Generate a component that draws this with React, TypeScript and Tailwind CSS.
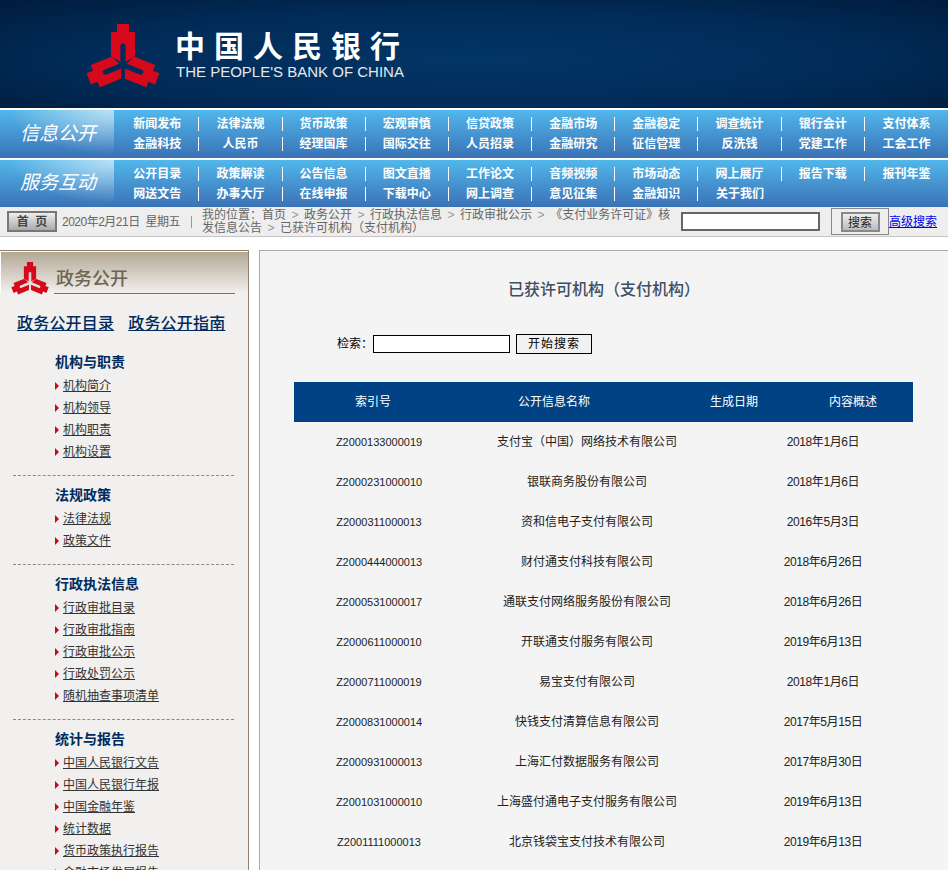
import type { ReactNode } from 'react'

const infoNav = [
  ['新闻发布', '法律法规', '货币政策', '宏观审慎', '信贷政策', '金融市场', '金融稳定', '调查统计', '银行会计', '支付体系'],
  ['金融科技', '人民币', '经理国库', '国际交往', '人员招录', '金融研究', '征信管理', '反洗钱', '党建工作', '工会工作'],
]
const serviceNav = [
  ['公开目录', '政策解读', '公告信息', '图文直播', '工作论文', '音频视频', '市场动态', '网上展厅', '报告下载', '报刊年鉴'],
  ['网送文告', '办事大厅', '在线申报', '下载中心', '网上调查', '意见征集', '金融知识', '关于我们', '', ''],
]

const sections = [
  { title: '机构与职责', items: ['机构简介', '机构领导', '机构职责', '机构设置'] },
  { title: '法规政策', items: ['法律法规', '政策文件'] },
  { title: '行政执法信息', items: ['行政审批目录', '行政审批指南', '行政审批公示', '行政处罚公示', '随机抽查事项清单'] },
  { title: '统计与报告', items: ['中国人民银行文告', '中国人民银行年报', '中国金融年鉴', '统计数据', '货币政策执行报告', '金融市场发展报告'] },
]

const rows = [
  ['Z2000133000019', '支付宝（中国）网络技术有限公司', '2018年1月6日'],
  ['Z2000231000010', '银联商务股份有限公司', '2018年1月6日'],
  ['Z2000311000013', '资和信电子支付有限公司', '2016年5月3日'],
  ['Z2000444000013', '财付通支付科技有限公司', '2018年6月26日'],
  ['Z2000531000017', '通联支付网络服务股份有限公司', '2018年6月26日'],
  ['Z2000611000010', '开联通支付服务有限公司', '2019年6月13日'],
  ['Z2000711000019', '易宝支付有限公司', '2018年1月6日'],
  ['Z2000831000014', '快钱支付清算信息有限公司', '2017年5月15日'],
  ['Z2000931000013', '上海汇付数据服务有限公司', '2017年8月30日'],
  ['Z2001031000010', '上海盛付通电子支付服务有限公司', '2019年6月13日'],
  ['Z2001111000013', '北京钱袋宝支付技术有限公司', '2019年6月13日'],
]

function Logo({ className }: { className: string }) {
  const top = 'M-6 -41H6V-33H12V-9L2.6 -3V-19A2.6 2.6 0 0 0 -2.6 -19V-3L-12 -9V-33H-6Z'
  const side = 'M-6 -37H6V-30H12V-7L2.6 -3V-19A2.6 2.6 0 0 0 -2.6 -19V-3L-12 -7V-30H-6Z'
  return (
    <svg viewBox="-45 -45 90 90" className={className} aria-hidden="true">
      <g fill="#d5091b">
        <path d={top} />
        <path d={side} transform="rotate(112)" />
        <path d={side} transform="rotate(248)" />
      </g>
    </svg>
  )
}

function NavBand({ label, data, height }: { label: string; data: string[][]; height: string }) {
  return (
    <div className={`flex bg-gradient-to-b from-[#52b7ea] to-[#3a72b6] ${height}`}>
      <div className="flex w-[115px] items-center pl-[20px] text-[19px] italic text-white bg-[radial-gradient(ellipse_at_top_right,rgba(255,255,255,0.6),transparent_65%)]">
        {label}
      </div>
      <div className="ml-[2px] flex flex-col gap-[6px] pt-[7px]">
        {data.map((row, r) => (
          <div key={r} className="flex">
            {row.map((item, i) => (
              <div
                key={i}
                className={`h-[14px] w-[83.2px] text-center text-[12px] font-bold leading-[14px] text-white ${
                  i < 9 && item && row[i + 1] ? 'border-r border-white' : ''
                }`}
              >
                {item}
              </div>
            ))}
          </div>
        ))}
      </div>
    </div>
  )
}

function Crumb({ children }: { children: ReactNode }) {
  return <span>{children}<span className="mx-[5.5px] text-[#999]">&gt;</span></span>
}

function Sidebar() {
  return (
    <aside className="w-[249px] shrink-0 border-r border-t border-[#8d8169] bg-[#f1f0ee]">
      <div className="relative h-[42px] border-l border-t border-white bg-gradient-to-b from-[#b4a895] to-[#f1f0ee]">
        <Logo className="absolute left-[6px] top-[8px] h-[46px] w-[46px]" />
        <div className="absolute left-[53px] right-[13px] top-[14px] h-[28px] border-b border-[#7d735f] pl-[2px] text-[18px] font-medium leading-[26px] text-[#6d6451]">
          政务公开
        </div>
      </div>
      <div className="mt-[20px] flex gap-[14px] pl-[17px] text-[16px] font-medium leading-[22px] tracking-[0.2px] text-[#002b5c]">
        <a className="underline">政务公开目录</a>
        <a className="underline">政务公开指南</a>
      </div>
      <div className="mt-[17px]">
        {sections.map((section, i) => (
          <div key={section.title}>
            {i > 0 && <div className="mx-[13px] mb-[9px] mt-[12px] w-[221px] border-t border-dashed border-[#8a8a8a]" />}
            <h3 className="pl-[55px] text-[14px] font-bold leading-[20px] text-[#002b5c]">{section.title}</h3>
            <ul className="mt-[3px]">
              {section.items.map((item) => (
                <li key={item} className="flex h-[22px] items-center pl-[55px] text-[12px] text-[#333]">
                  <span className="mr-[4px] h-0 w-0 border-y-[4px] border-l-[4px] border-y-transparent border-l-[#c8091b]" />
                  <a className="underline">{item}</a>
                </li>
              ))}
            </ul>
          </div>
        ))}
      </div>
    </aside>
  )
}

function Main() {
  return (
    <main className="ml-[10px] flex-1 border-l border-t border-[#aaaaaa] bg-[#f4f4f4]">
      <h1 className="mt-[28px] text-center text-[16px] font-medium leading-[22px] text-[#3e4f63]">
        已获许可机构（支付机构）
      </h1>
      <div className="ml-[77px] mt-[33px] flex h-[20px] items-center text-[12px] text-black">
        <span className="w-[36px]">检索：</span>
        <div className="h-[18px] w-[137px] border border-black bg-white" />
        <button className="ml-[6px] h-[20px] w-[76px] border border-black bg-[#f1f1f1] text-[12px] tracking-[1px]">开始搜索</button>
      </div>
      <div className="ml-[34px] mt-[28px] w-[619px]">
        <div className="flex h-[40px] items-center bg-[#004283] text-center text-[12px] text-white">
          <div className="w-[158px]">索引号</div>
          <div className="w-[204px]">公开信息名称</div>
          <div className="w-[156px]">生成日期</div>
          <div className="w-[82px]">内容概述</div>
        </div>
        {rows.map(([code, name, date]) => (
          <div key={code} className="flex h-[40px] items-center text-center text-[12px] text-[#222]">
            <div className="w-[170px] text-[11px]">{code}</div>
            <div className="w-[246px]">{name}</div>
            <div className="ml-[23px] w-[180px] tracking-[-0.4px]">{date}</div>
          </div>
        ))}
      </div>
    </main>
  )
}

export default function App() {
  return (
    <div className="h-[870px] overflow-hidden bg-white font-['Liberation_Sans','Noto_Sans_CJK_SC',sans-serif]">
      {/* Banner */}
      <header className="relative h-[108px] bg-[radial-gradient(ellipse_at_50%_55%,#023566,#012c59_55%,#001c3d)]">
        <Logo className="absolute left-[78px] top-[20px] h-[90px] w-[90px]" />
        <div className="absolute left-[175px] top-[27px] whitespace-nowrap text-[30px] font-bold leading-[40px] tracking-[9px] text-white">
          中国人民银行
        </div>
        <div className="absolute left-[176px] top-[63px] whitespace-nowrap text-[15px] leading-[18px] text-[#e4e8ec]">
          THE PEOPLE'S BANK OF CHINA
        </div>
      </header>

      {/* Navigation */}
      <div className="pt-[2px]">
        <NavBand label="信息公开" data={infoNav} height="h-[48px]" />
      </div>
      <div className="pt-[2px]">
        <NavBand label="服务互动" data={serviceNav} height="h-[47px]" />
      </div>

      {/* Breadcrumb */}
      <div className="flex h-[30px] items-center border-b border-[#c4c4c4] bg-[#eeeeee] text-[12px] text-[#666]">
        <button className="ml-[7px] h-[21px] w-[50px] border-2 border-[#777] bg-gradient-to-b from-[#eee] to-[#aaa] text-[12px] font-bold text-[#444]">
          首&nbsp;&nbsp;页
        </button>
        <span className="ml-[5px] w-[129px] tracking-[-0.5px]">2020年2月21日&nbsp;&nbsp;星期五</span>
        <span className="h-[12px] border-l border-[#999]" />
        <div className="ml-[10px] w-[471px] text-[12px] leading-[13px]">
          我的位置：首页<span className="mx-[5.5px] text-[#999]">&gt;</span>
          <Crumb>政务公开</Crumb>
          <Crumb>行政执法信息</Crumb>
          <Crumb>行政审批公示</Crumb>
          《支付业务许可证》核发信息公告
          <span className="mx-[5.5px] text-[#999]">&gt;</span>已获许可机构（支付机构）
        </div>
        <div className="ml-[8px] h-[19px] w-[139px] border-2 border-[#666] bg-white" />
        <div className="ml-[11px] flex h-[27px] w-[58px] items-center justify-center border border-[#888] bg-[#eeeeee]">
          <button className="h-[20px] w-[39px] border-2 border-[#888] bg-gradient-to-b from-[#eee] to-[#bbb] text-[12px] text-[#222]">搜索</button>
        </div>
        <a className="whitespace-nowrap text-[12px] text-[#0000ee] underline">高级搜索</a>
      </div>

      {/* Body */}
      <div className="flex pt-[13px]">
        <Sidebar />
        <Main />
      </div>
    </div>
  )
}
